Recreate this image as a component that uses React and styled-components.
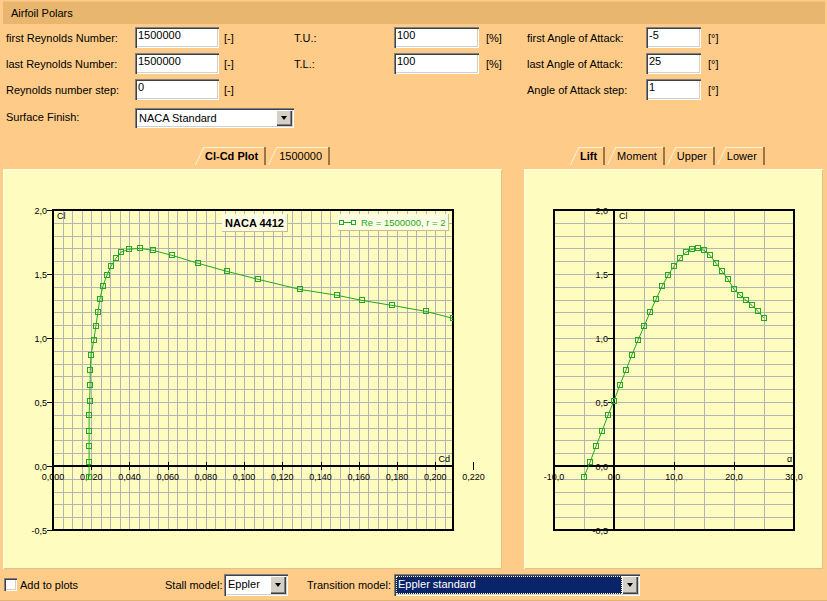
import React from 'react'
import styled, { createGlobalStyle, css } from 'styled-components'

const GlobalStyle = createGlobalStyle`
  body { margin: 0; background: #fecc88; }
`

const Window = styled.div`
  width: 827px;
  height: 601px;
  box-sizing: border-box;
  background: #fecc88;
  border-bottom: 1px solid #e2b474;
  font-family: 'Liberation Sans', Arial, sans-serif;
  font-size: 11px;
  color: #000;
  display: flex;
  flex-direction: column;
  overflow: hidden;
`

const TitleBar = styled.div`
  margin: 1px 2px 0 3px;
  height: 22px;
  line-height: 22px;
  padding-left: 8px;
  background: #e8b66e;
  border-top: 1px solid #f0c27f;
`

const Form = styled.div`
  display: grid;
  grid-template-columns: 129px 84px 75px 100px 85px 48px 119px 55px 1fr;
  grid-template-rows: 21px 21px 21px 23px;
  row-gap: 5px;
  padding: 3px 0 0 6px;
  align-items: center;
`

const Label = styled.div`
  white-space: nowrap;
  grid-column: ${p => p.$col || 'auto'};
`

const Unit = styled.div`
  white-space: nowrap;
  padding-left: ${p => p.$pad || 5}px;
`

const Field = styled.div`
  box-sizing: border-box;
  height: 21px;
  padding: 1px 0 0 3px;
  line-height: 14px;
  background: #fff;
  box-shadow: inset 1px 1px 0 #808080, inset 2px 2px 0 #404040,
    inset -1px -1px 0 #ffffff, inset -2px -2px 0 #d4d0c8;
`

const Combo = styled.div`
  box-sizing: border-box;
  height: ${p => p.$h || 21}px;
  padding: 2px;
  display: flex;
  background: #fff;
  box-shadow: inset 1px 1px 0 #808080, inset 2px 2px 0 #404040,
    inset -1px -1px 0 #ffffff, inset -2px -2px 0 #d4d0c8;
  grid-column: ${p => p.$col || 'auto'};
  align-self: ${p => p.$align || 'center'};
`

const ComboValue = styled.div`
  flex: 1;
  padding-left: 2px;
  line-height: 17px;
  white-space: nowrap;
  overflow: hidden;
  ${p => p.$selected && css`
    background: #0a246a;
    color: #fff;
    outline: 1px dotted #fff3a0;
    outline-offset: -1px;
  `}
`

const ComboButton = styled.div`
  width: 16px;
  background: #d4d0c8;
  display: flex;
  align-items: center;
  justify-content: center;
  box-shadow: inset 1px 1px 0 #ffffff, inset -1px -1px 0 #404040, inset -2px -2px 0 #808080;
  &::after {
    content: '';
    border-left: 3.5px solid transparent;
    border-right: 3.5px solid transparent;
    border-top: 4px solid #000;
  }
`

const Main = styled.div`
  display: flex;
  gap: 22px;
  padding-left: 3px;
  margin-top: 19px;
`

const Column = styled.div`
  display: flex;
  flex-direction: column;
  width: ${p => p.$w}px;
`

const TabRow = styled.div`
  display: flex;
  gap: 2px;
  height: 18px;
  margin-bottom: 4px;
  padding-left: ${p => p.$offset}px;
`

const Tab = styled.div`
  position: relative;
  height: 18px;
  line-height: 18px;
  padding: 0 6px 0 ${p => p.$padLeft || 10}px;
  font-weight: ${p => (p.$active ? 700 : 400)};
  border-right: 2px solid #9a7546;
  &::before {
    content: '';
    position: absolute;
    left: 0;
    right: 8px;
    top: 0;
    bottom: 0;
    border-left: 1px solid #fff2d2;
    border-top: 1px solid #fff2d2;
    transform: skewX(-25deg);
    transform-origin: bottom left;
  }
`

const Panel = styled.div`
  width: ${p => p.$w}px;
  height: 400px;
  background: #fffcc0;
  box-shadow: inset 1px 1px 0 #fffee6, inset -1px -1px 0 #dcc28c;
  svg { display: block; }
`

const PlotText = styled.text`
  font-family: 'Liberation Sans', Arial, sans-serif;
  font-size: ${p => p.$size || 9}px;
  font-weight: ${p => (p.$bold ? 700 : 400)};
  fill: ${p => p.$color || '#000'};
`

const BottomBar = styled.div`
  flex: 1;
  display: grid;
  grid-template-columns: 161px 59px 64px 106px 246px;
  align-items: center;
  padding-left: 4px;
`

const CheckRow = styled.div`
  display: flex;
  align-items: center;
  gap: 3px;
`

const CheckBox = styled.div`
  width: 13px;
  height: 13px;
  box-sizing: border-box;
  background: #fff;
  box-shadow: inset 1px 1px 0 #808080, inset 2px 2px 0 #404040,
    inset -1px -1px 0 #ffffff, inset -2px -2px 0 #d4d0c8;
`

const GREEN = '#22a822'
const GRID = '#b4b4b4'

// polar for alpha = -5 .. 25, step 1
const CL = [-0.086, 0.029, 0.154, 0.273, 0.396, 0.51, 0.635, 0.748, 0.87, 0.982, 1.091, 1.2, 1.302, 1.404, 1.49,
  1.56, 1.622, 1.67, 1.693, 1.7, 1.685, 1.646, 1.584, 1.521, 1.459, 1.38, 1.334, 1.294, 1.255, 1.208, 1.154]
const CD = [0.0189, 0.0189, 0.0189, 0.0189, 0.0189, 0.0192, 0.0194, 0.0195, 0.0199, 0.02135, 0.0224, 0.0235,
  0.0245, 0.0261, 0.0282, 0.0303, 0.0329, 0.0355, 0.0397, 0.0454, 0.0522, 0.0622, 0.0758, 0.0909, 0.1072,
  0.1291, 0.1485, 0.1616, 0.1773, 0.1951, 0.2092]
const ALPHA = CL.map((_, i) => i - 5)

const fmt = (v, d) => v.toFixed(d).replace('.', ',')
const px = v => Math.round(v) + 0.5

// shared Cl axis
const Y0 = 297
const SY = 128
const TOP = 41
const BOTTOM = 361
const yOf = cl => Y0 - cl * SY
const clGrid = Array.from({ length: 24 }, (_, i) => -0.4 + i * 0.1).filter(v => Math.abs(v) > 0.01)
const clMajor = [-0.5, 0, 0.5, 1, 1.5, 2]

function Curve({ pts, clip }) {
  return (
    <g clipPath={clip}>
      <polyline points={pts.map(p => p.join(',')).join(' ')} fill="none" stroke={GREEN} strokeWidth="1" />
      {pts.map(([x, y], i) => (
        <rect key={i} x={Math.round(x) - 2.5} y={Math.round(y) - 2.5} width="5" height="5" fill="none" stroke={GREEN} />
      ))}
    </g>
  )
}

function PolarPlot() {
  const x0 = 50
  const sx = 1911
  const right = 450
  const xOf = cd => x0 + cd * sx
  const vLines = Array.from({ length: 41 }, (_, i) => xOf((i + 1) * 0.005))
  const majors = Array.from({ length: 12 }, (_, i) => i * 0.02)
  const pts = CD.map((cd, i) => [xOf(cd), yOf(CL[i])])
  return (
    <svg width="499" height="400">
      <defs>
        <clipPath id="polarClip">
          <rect x={x0} y={TOP} width={right - x0} height={BOTTOM - TOP} />
        </clipPath>
      </defs>
      <g stroke={GRID} strokeWidth="1" shapeRendering="crispEdges">
        {vLines.map((x, i) => <line key={i} x1={px(x)} x2={px(x)} y1={TOP} y2={BOTTOM} />)}
        {clGrid.map((c, i) => <line key={i} x1={x0} x2={right} y1={px(yOf(c))} y2={px(yOf(c))} />)}
      </g>
      <g stroke="#000" shapeRendering="crispEdges">
        <rect x={x0} y={TOP} width={right - x0} height={BOTTOM - TOP} fill="none" strokeWidth="2" />
        <line x1={x0} x2={right} y1={Y0} y2={Y0} strokeWidth="2" />
        {majors.map((m, i) => <line key={i} x1={px(xOf(m))} x2={px(xOf(m))} y1={Y0 - 4} y2={Y0 + 4} />)}
        {clMajor.map((c, i) => <line key={i} x1={44} x2={x0} y1={px(yOf(c))} y2={px(yOf(c))} />)}
      </g>
      {majors.map((m, i) => (
        <PlotText key={i} x={xOf(m)} y={310.5} textAnchor="middle">{fmt(m, 3)}</PlotText>
      ))}
      {clMajor.map((c, i) => (
        <PlotText key={i} x={44} y={yOf(c) + 3.5} textAnchor="end">{fmt(c, 1)}</PlotText>
      ))}
      <PlotText x={54} y={50}>Cl</PlotText>
      <PlotText x={447} y={292.5} textAnchor="end">Cd</PlotText>
      <Curve pts={pts} clip="url(#polarClip)" />
      <g shapeRendering="crispEdges">
        <rect x={219} y={45} width={65} height={17} fill="#fffee4" />
        <line x1={284.5} x2={284.5} y1={45} y2={62} stroke="#c9bd8c" />
        <line x1={219} x2={285} y1={62.5} y2={62.5} stroke="#c9bd8c" />
      </g>
      <PlotText x={251.5} y={58} textAnchor="middle" $size={11} $bold>NACA 4412</PlotText>
      <g shapeRendering="crispEdges">
        <rect x={335} y={45} width={110} height={16} fill="#fffee4" />
        <line x1={445.5} x2={445.5} y1={45} y2={61} stroke="#c9bd8c" />
        <line x1={335} x2={446} y1={61.5} y2={61.5} stroke="#c9bd8c" />
      </g>
      <line x1={339} x2={350} y1={53.5} y2={53.5} stroke={GREEN} />
      <rect x={336.5} y={51.5} width="4" height="4" fill="#fffee4" stroke={GREEN} />
      <rect x={348.5} y={51.5} width="4" height="4" fill="#fffee4" stroke={GREEN} />
      <PlotText x={358} y={57} $size={9.5} $color={GREEN}>Re = 1500000, r = 2</PlotText>
    </svg>
  )
}

function LiftPlot() {
  const x0 = 90
  const sx = 6
  const left = 30
  const right = 270
  const xOf = a => x0 + a * sx
  const vLines = [-5, 5, 10, 15, 20, 25].map(xOf)
  const majors = [-10, 0, 10, 20, 30]
  const pts = ALPHA.map((a, i) => [xOf(a), yOf(CL[i])])
  return (
    <svg width="299" height="400">
      <g stroke={GRID} strokeWidth="1" shapeRendering="crispEdges">
        {vLines.map((x, i) => <line key={i} x1={px(x)} x2={px(x)} y1={TOP} y2={BOTTOM} />)}
        {clGrid.map((c, i) => <line key={i} x1={left} x2={right} y1={px(yOf(c))} y2={px(yOf(c))} />)}
      </g>
      <g stroke="#000" shapeRendering="crispEdges">
        <rect x={left} y={TOP} width={right - left} height={BOTTOM - TOP} fill="none" strokeWidth="2" />
        <line x1={left} x2={right} y1={Y0} y2={Y0} strokeWidth="2" />
        <line x1={x0} x2={x0} y1={TOP} y2={BOTTOM} strokeWidth="2" />
        {majors.map((m, i) => <line key={i} x1={px(xOf(m))} x2={px(xOf(m))} y1={Y0 - 4} y2={Y0 + 4} />)}
        {clMajor.map((c, i) => <line key={i} x1={84} x2={x0} y1={px(yOf(c))} y2={px(yOf(c))} />)}
      </g>
      {majors.map((m, i) => (
        <PlotText key={i} x={xOf(m)} y={310.5} textAnchor="middle">{fmt(m, 1)}</PlotText>
      ))}
      {clMajor.map((c, i) => (
        <PlotText key={i} x={84} y={yOf(c) + 3.5} textAnchor="end">{fmt(c, 1)}</PlotText>
      ))}
      <PlotText x={95} y={50}>Cl</PlotText>
      <PlotText x={263} y={292.5}>α</PlotText>
      <Curve pts={pts} />
    </svg>
  )
}

function Select({ value, col, h, align, selected }) {
  return (
    <Combo $col={col} $h={h} $align={align}>
      <ComboValue $selected={selected}>{value}</ComboValue>
      <ComboButton />
    </Combo>
  )
}

export default function App() {
  return (
    <Window>
      <GlobalStyle />
      <TitleBar>Airfoil Polars</TitleBar>
      <Form>
        <Label>first Reynolds Number:</Label>
        <Field>1500000</Field>
        <Unit>[-]</Unit>
        <Label>T.U.:</Label>
        <Field>100</Field>
        <Unit $pad={7}>[%]</Unit>
        <Label>first Angle of Attack:</Label>
        <Field>-5</Field>
        <Unit $pad={7}>[°]</Unit>

        <Label>last Reynolds Number:</Label>
        <Field>1500000</Field>
        <Unit>[-]</Unit>
        <Label>T.L.:</Label>
        <Field>100</Field>
        <Unit $pad={7}>[%]</Unit>
        <Label>last Angle of Attack:</Label>
        <Field>25</Field>
        <Unit $pad={7}>[°]</Unit>

        <Label>Reynolds number step:</Label>
        <Field>0</Field>
        <Unit>[-]</Unit>
        <Label $col="7">Angle of Attack step:</Label>
        <Field>1</Field>
        <Unit $pad={7}>[°]</Unit>

        <Label>Surface Finish:</Label>
        <Select col="2 / 4" value="NACA Standard" h={20} align="end" />
      </Form>

      <Main>
        <Column $w={499}>
          <TabRow $offset={192}>
            <Tab $active>Cl-Cd Plot</Tab>
            <Tab $padLeft={11}>1500000</Tab>
          </TabRow>
          <Panel $w={499}>
            <PolarPlot />
          </Panel>
        </Column>
        <Column $w={299}>
          <TabRow $offset={46}>
            <Tab $active>Lift</Tab>
            <Tab>Moment</Tab>
            <Tab>Upper</Tab>
            <Tab>Lower</Tab>
          </TabRow>
          <Panel $w={299}>
            <LiftPlot />
          </Panel>
        </Column>
      </Main>

      <BottomBar>
        <CheckRow>
          <CheckBox />
          <span>Add to plots</span>
        </CheckRow>
        <Label>Stall model:</Label>
        <Select value="Eppler" h={22} />
        <Unit $pad={19}>Transition model:</Unit>
        <Select value="Eppler standard" h={22} selected />
      </BottomBar>
    </Window>
  )
}
